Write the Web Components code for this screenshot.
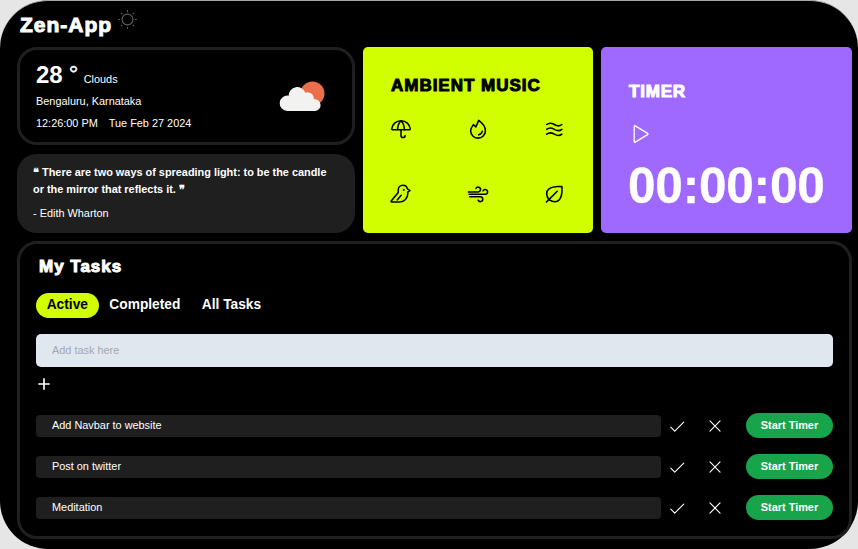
<!DOCTYPE html>
<html lang="en">
<head>
<meta charset="utf-8">
<title>Zen-App</title>
<style>
html,body{margin:0;background:#e6e6e6}
body{width:858px;height:549px;overflow:hidden;font:11px "Liberation Sans",Arial,sans-serif;color:#fff}
</style>
</head>
<body>
<zen-app></zen-app>
<script>
const define = (name, css, html) => customElements.define(name, class extends HTMLElement {
  constructor() {
    super();
    const t = document.createElement('template');
    t.innerHTML = `<style>*{box-sizing:border-box}${css}</style>${typeof html === 'function' ? html(this) : html}`;
    this.attachShadow({mode: 'open'}).append(t.content.cloneNode(true));
  }
});

const icons = {
  sun: '<circle cx="128" cy="128" r="66"/><path d="M128 32V20M128 236v-12M32 128H20M236 128h-12M60 60l-8-8M204 204l-8-8M60 196l-8 8M204 52l-8 8"/>',
  umbrella: '<path d="M20 128c5-54 50-96 108-96s103 42 108 96c0 5-3 8-8 8H28c-5 0-8-3-8-8z"/><path d="M128 136v68a24 24 0 0 0 48 0M88 136c0-64 40-104 40-104s40 40 40 104"/>',
  fire: '<path d="M136 28 103 105 75 77C55 103 42 124 42 148a86 86 0 0 0 172 0c0-60-50-100-78-120z"/><path d="M136 196c22-4 38-20 42-42"/>',
  waves: '<path d="M32 76c73-61 103 61 176 0M32 132c73-61 103 61 176 0M32 188c73-61 103 61 176 0"/>',
  bird: '<path d="M130 142l-46 56M96 80c0-31 26-54 55-54 26 0 47 18 52 42l29 20-24 16v16c0 56-43 102-98 102H20c-7 0-10-7-6-12L96 110z"/><circle cx="160" cy="80" r="7" fill="currentColor" stroke-width="8"/>',
  wind: '<path d="M16 104h112a28 28 0 1 0-24-40M24 132h188a28 28 0 1 0-26-40M32 160h124a28 28 0 1 1-26 40"/>',
  leaf: '<path d="M56 194c-72-120 28-162 152-152 10 124-32 224-152 152zM154 96 30 220"/>',
  play: '<path d="M72 40v176a8 8 0 0 0 12 7l144-88a8 8 0 0 0 0-14L84 33a8 8 0 0 0-12 7z"/>',
  plus: '<path d="M46 128h164M128 46v164"/>',
  check: '<path d="m40 144 56 56L224 72"/>',
  x: '<path d="M200 56 56 200M200 200 56 56"/>'
};
define('zen-icon', ':host{display:block;width:24px;height:24px;flex:none}svg{display:block;width:100%;height:100%}',
  e => `<svg viewBox="0 0 256 256" fill="none" stroke="currentColor" stroke-width="${e.getAttribute('weight') || 18}" stroke-linecap="round" stroke-linejoin="round">${icons[e.getAttribute('name')]}</svg>`);

define('zen-heading', ':host{display:block;font-weight:700;font-size:17px;line-height:24px;white-space:nowrap;-webkit-text-stroke:1px currentColor;letter-spacing:.98px}', '<slot></slot>');

define('weather-card', `
:host{display:flex;justify-content:space-between;border:3px solid #1f1f1f;border-radius:20px;padding:11px 27px 0 16px;box-sizing:border-box;line-height:22px;font-size:10.900px}
.now{display:flex;align-items:baseline;height:29px;line-height:28px}
b{font-size:24px}.deg{font-size:24px;line-height:20px;margin:0 6px 0 6px;font-weight:400;width:9px;position:relative;top:-1px;-webkit-text-stroke:.4px currentColor}
.time{display:flex;gap:11px}
svg{width:48px;height:34px;margin-top:19px}`, `
<div><div class="now"><b>28</b><b class="deg">°</b><span>Clouds</span></div>
<div>Bengaluru, Karnataka</div><div class="time"><span>12:26:00 PM</span><span>Tue Feb 27 2024</span></div></div>
<svg viewBox="0 0 48 34"><circle cx="35.500" cy="13.500" r="12" fill="#ec6e4c"/><path fill="#f2f2f0" d="M10.500 31a7.700 7.700 0 1 1 1.100-15.300A8.600 8.600 0 0 1 28.300 12.800 6.200 6.200 0 0 1 36.800 19.300 5.900 5.900 0 1 1 38.300 31z"/></svg>`);

define('quote-card', `
:host{display:block;background:#1f1f1f;border-radius:20px;padding:10px 16px 0;box-sizing:border-box;white-space:nowrap}
p{margin:0;font-weight:700;font-size:10.900px;line-height:16.500px}small{display:block;font-size:10.900px;line-height:16px;margin-top:8px}`,
`<p>❝ There are two ways of spreading light: to be the candle<br>or the mirror that reflects it. ❞</p><small>- Edith Wharton</small>`);

define('music-card', `
:host{display:block;background:#d2ff00;color:#000;border-radius:5px;padding:27px 28px 0;box-sizing:border-box}
.g{display:grid;grid-template-columns:repeat(3,22px);justify-content:space-between;row-gap:43px;margin:20px -1px 0}
zen-icon{width:22px;height:22px}`, `<zen-heading>AMBIENT MUSIC</zen-heading><div class="g">${['umbrella','fire','waves','bird','wind','leaf'].map(n => `<zen-icon name="${n}"></zen-icon>`).join('')}</div>`);

define('timer-card', `
:host{display:block;background:#9f69ff;border-radius:5px;padding:33px 27px 0 28px;box-sizing:border-box}
zen-heading{letter-spacing:.8px}
zen-icon{width:22px;height:22px;margin:19px 0 0 -1px}
.clock{font-size:49.500px;line-height:56px;font-weight:700;margin:13px 0 0 -1px;letter-spacing:-.2px;-webkit-text-stroke:.3px currentColor}`,
`<zen-heading>TIMER</zen-heading><zen-icon name="play" weight="15"></zen-icon><div class="clock">00:00:00</div>`);

define('task-tab', `
:host{display:block;font-weight:700;font-size:13.750px;line-height:24.500px;padding:0 10.700px;border-radius:13px;white-space:nowrap}
:host([active]){background:#d2ff00;color:#000}`, '<slot></slot>');

define('task-row', `
:host{display:flex;align-items:center;height:25px}
.name{width:625px;height:22px;line-height:21px;font-size:10.900px;background:#1f1f1f;border-radius:4px;padding-left:16px}
zen-icon{width:18px;height:18px;margin-left:7px}
zen-icon+zen-icon{margin-left:20px}
button{margin:0 0 0 22px;border:0;padding:0 0 1px;width:87px;height:25px;border-radius:13px;background:#18a44b;color:#fff;font:700 10.900px "Liberation Sans",sans-serif}`,
`<div class="name"><slot></slot></div><zen-icon name="check" weight="16"></zen-icon><zen-icon name="x" weight="16"></zen-icon><button>Start Timer</button>`);

define('task-board', `
:host{display:block;border:3px solid #1f1f1f;border-radius:20px;padding:11px 16px 0;box-sizing:border-box}
zen-heading{margin-left:3px}
.tabs{display:flex;margin-top:14px}
input{display:block;width:797px;height:33px;margin-top:16.500px;border:0;border-radius:5px;background:#e1e7ef;padding:0 16px 1px;font:10.900px "Liberation Sans",sans-serif}
input::placeholder{color:#a0a7b3;opacity:1}
.add{width:16px;height:16px;margin:9px 0 21px 0}
.rows{display:grid;gap:16px}`, `
<zen-heading>My Tasks</zen-heading>
<div class="tabs"><task-tab active>Active</task-tab><task-tab>Completed</task-tab><task-tab>All Tasks</task-tab></div>
<input placeholder="Add task here"><zen-icon class="add" name="plus" weight="26"></zen-icon>
<div class="rows"><task-row>Add Navbar to website</task-row><task-row>Post on twitter</task-row><task-row>Meditation</task-row></div>`);

define('zen-app', `
:host{display:block;width:858px;height:549px;box-sizing:border-box;background:#000;border-top:1px solid #a3a8a5;border-radius:48px;padding:0 6px 0 17px}
header{display:flex;height:46px;padding:9px 0 0 3px;gap:6px}
header zen-heading{font-size:21px;line-height:29px}
header zen-icon{width:21px;height:21px;margin:-1px 0 0 -1px;color:#5f5f5f}
.top{display:grid;grid-template-columns:338px 230px 251px;gap:8px;height:186px}
.left{display:grid;grid-template-rows:98px 79px;gap:9px}
task-board{height:298px;margin-top:8px}`, `
<header><zen-heading>Zen-App</zen-heading><zen-icon name="sun" weight="14"></zen-icon></header>
<div class="top"><div class="left"><weather-card></weather-card><quote-card></quote-card></div><music-card></music-card><timer-card></timer-card></div>
<task-board></task-board>`);
</script>
</body>
</html>
